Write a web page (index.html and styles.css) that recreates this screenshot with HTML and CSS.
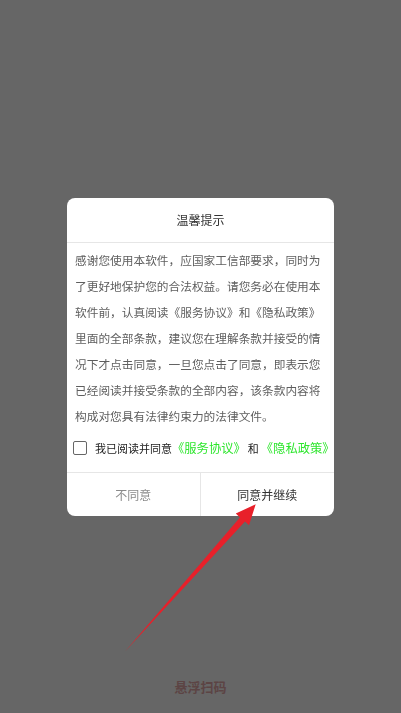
FILE: index.html
```html
<!DOCTYPE html>
<html lang="zh-CN">
<head>
<meta charset="utf-8">
<title>温馨提示</title>
<link rel="stylesheet" href="styles.css">
</head>
<body>
<main class="page">
  <div class="float-scan">悬浮扫码</div>
</main>

<div class="overlay">
  <section class="dialog">
    <header class="dialog-title">温馨提示</header>
    <p class="dialog-body">感谢您使用本软件，应国家工信部要求，同时为了更好地保护您的合法权益。请您务必在使用本软件前，认真阅读《服务协议》和《隐私政策》里面的全部条款，建议您在理解条款并接受的情况下才点击同意，一旦您点击了同意，即表示您已经阅读并接受条款的全部内容，该条款内容将构成对您具有法律约束力的法律文件。</p>
    <label class="agree-row">
      <span class="checkbox"></span>
      <span class="agree-text">我已阅读并同意<span class="link">《服务协议》</span><span class="and">和</span><span class="link">《隐私政策》</span></span>
    </label>
    <footer class="dialog-actions">
      <button class="btn btn-cancel">不同意</button>
      <button class="btn btn-ok">同意并继续</button>
    </footer>
  </section>
</div>

<svg class="arrow" width="401" height="713" viewBox="0 0 401 713" aria-hidden="true">
  <polygon points="255.7,504.3 235.8,513.6 239.9,517.4 125,651.5 245,521.6 249,525.2" fill="#e8202a"/>
</svg>
</body>
</html>
```

FILE: styles.css
```css
* {
  box-sizing: border-box;
}

html, body {
  margin: 0;
  padding: 0;
}

body {
  width: 401px;
  height: 713px;
  overflow: hidden;
  background: #666666;
  font-family: "Noto Sans CJK SC", "Noto Sans", "Liberation Sans", sans-serif;
}

.page {
  height: 713px;
  display: flex;
  flex-direction: column;
  justify-content: flex-end;
  align-items: center;
  padding-bottom: 16px;
}

.float-scan {
  font-size: 13px;
  line-height: 20px;
  font-weight: bold;
  color: #5c4444;
}

.overlay {
  position: fixed;
  inset: 0;
  display: flex;
  align-items: center;
  justify-content: center;
}

.dialog {
  width: 267px;
  background: #ffffff;
  border-radius: 8px;
  overflow: hidden;
  display: flex;
  flex-direction: column;
}

.dialog-title {
  height: 45px;
  line-height: 44px;
  text-align: center;
  font-size: 12px;
  color: #333333;
  border-bottom: 1px solid #e6e6e6;
}

.dialog-body {
  margin: 0;
  padding: 4px 8px 0 8px;
  font-size: 11.7px;
  line-height: 26px;
  color: #5e5e5e;
}

.agree-row {
  margin-top: 4px;
  height: 31px;
  padding: 0 0 0 6px;
  display: flex;
  align-items: center;
  white-space: nowrap;
}

.checkbox {
  flex: none;
  width: 14px;
  height: 14px;
  border: 1.6px solid #666666;
  border-radius: 2px;
  background: #fff;
}

.agree-text {
  margin-left: 8px;
  font-size: 11px;
  color: #222222;
}

.link {
  font-size: 12.3px;
  color: #2ee62e;
}

.and {
  margin: 0 2px;
}

.dialog-actions {
  margin-top: 8px;
  border-top: 1px solid #e6e6e6;
  display: grid;
  grid-template-columns: 1fr 1fr;
  height: 44px;
}

.btn {
  border: 0;
  background: transparent;
  padding: 0;
  margin: 0;
  font-family: inherit;
  font-size: 12px;
  line-height: 43px;
  height: 43px;
}

.btn-cancel {
  color: #8a8a8a;
  border-right: 1px solid #e6e6e6;
}

.btn-ok {
  color: #333333;
}

.arrow {
  position: fixed;
  left: 0;
  top: 0;
  pointer-events: none;
}
```
